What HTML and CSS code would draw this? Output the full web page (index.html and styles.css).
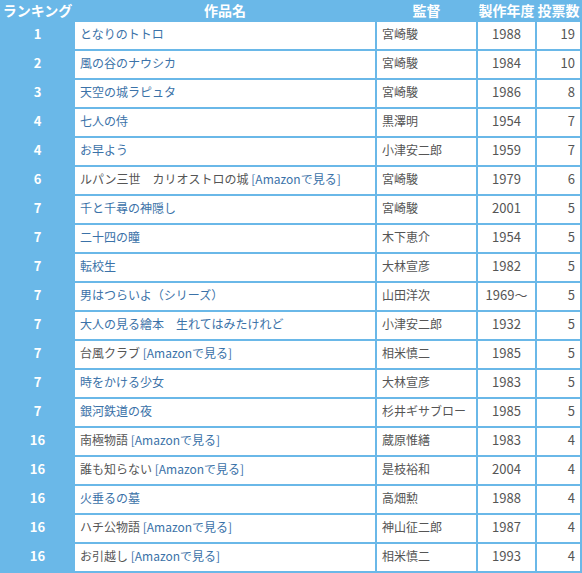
FILE: index.html
```html
<!DOCTYPE html>
<html lang="ja">
<head>
    <meta charset="UTF-8">
    <meta name="viewport" content="width=device-width, initial-scale=1.0">
    <title>ランキング</title>
    <link rel="stylesheet" href="styles.css">
</head>
<body>
    <table class="ranking">
        <thead>
            <tr>
                <th class="col-rank">ランキング</th>
                <th class="col-title">作品名</th>
                <th class="col-director">監督</th>
                <th class="col-year">製作年度</th>
                <th class="col-votes">投票数</th>
            </tr>
        </thead>
        <tbody>
            <tr><td class="rank">1</td><td class="title"><a href="#">となりのトトロ</a></td><td class="director">宮崎駿</td><td class="year">1988</td><td class="votes">19</td></tr>
            <tr><td class="rank">2</td><td class="title"><a href="#">風の谷のナウシカ</a></td><td class="director">宮崎駿</td><td class="year">1984</td><td class="votes">10</td></tr>
            <tr><td class="rank">3</td><td class="title"><a href="#">天空の城ラピュタ</a></td><td class="director">宮崎駿</td><td class="year">1986</td><td class="votes">8</td></tr>
            <tr><td class="rank">4</td><td class="title"><a href="#">七人の侍</a></td><td class="director">黒澤明</td><td class="year">1954</td><td class="votes">7</td></tr>
            <tr><td class="rank">4</td><td class="title"><a href="#">お早よう</a></td><td class="director">小津安二郎</td><td class="year">1959</td><td class="votes">7</td></tr>
            <tr><td class="rank">6</td><td class="title">ルパン三世　カリオストロの城 <a href="#">[Amazonで見る]</a></td><td class="director">宮崎駿</td><td class="year">1979</td><td class="votes">6</td></tr>
            <tr><td class="rank">7</td><td class="title"><a href="#">千と千尋の神隠し</a></td><td class="director">宮崎駿</td><td class="year">2001</td><td class="votes">5</td></tr>
            <tr><td class="rank">7</td><td class="title"><a href="#">二十四の瞳</a></td><td class="director">木下恵介</td><td class="year">1954</td><td class="votes">5</td></tr>
            <tr><td class="rank">7</td><td class="title"><a href="#">転校生</a></td><td class="director">大林宣彦</td><td class="year">1982</td><td class="votes">5</td></tr>
            <tr><td class="rank">7</td><td class="title"><a href="#">男はつらいよ（シリーズ）</a></td><td class="director">山田洋次</td><td class="year">1969～</td><td class="votes">5</td></tr>
            <tr><td class="rank">7</td><td class="title"><a href="#">大人の見る繪本　生れてはみたけれど</a></td><td class="director">小津安二郎</td><td class="year">1932</td><td class="votes">5</td></tr>
            <tr><td class="rank">7</td><td class="title">台風クラブ <a href="#">[Amazonで見る]</a></td><td class="director">相米慎二</td><td class="year">1985</td><td class="votes">5</td></tr>
            <tr><td class="rank">7</td><td class="title"><a href="#">時をかける少女</a></td><td class="director">大林宣彦</td><td class="year">1983</td><td class="votes">5</td></tr>
            <tr><td class="rank">7</td><td class="title"><a href="#">銀河鉄道の夜</a></td><td class="director">杉井ギサブロー</td><td class="year">1985</td><td class="votes">5</td></tr>
            <tr><td class="rank">16</td><td class="title">南極物語 <a href="#">[Amazonで見る]</a></td><td class="director">蔵原惟繕</td><td class="year">1983</td><td class="votes">4</td></tr>
            <tr><td class="rank">16</td><td class="title">誰も知らない <a href="#">[Amazonで見る]</a></td><td class="director">是枝裕和</td><td class="year">2004</td><td class="votes">4</td></tr>
            <tr><td class="rank">16</td><td class="title"><a href="#">火垂るの墓</a></td><td class="director">高畑勲</td><td class="year">1988</td><td class="votes">4</td></tr>
            <tr><td class="rank">16</td><td class="title">ハチ公物語 <a href="#">[Amazonで見る]</a></td><td class="director">神山征二郎</td><td class="year">1987</td><td class="votes">4</td></tr>
            <tr><td class="rank">16</td><td class="title">お引越し <a href="#">[Amazonで見る]</a></td><td class="director">相米慎二</td><td class="year">1993</td><td class="votes">4</td></tr>
        </tbody>
    </table>
</body>
</html>
```

FILE: styles.css
```css
body {
    margin: 0;
    background: #6ab8e8;
    font-family: "Noto Sans CJK JP", "Noto Sans", sans-serif;
}

.ranking {
    width: 582px;
    border-collapse: separate;
    border-spacing: 2px;
    margin-top: -2px;
    background: #6ab8e8;
    table-layout: fixed;
    font-size: 12px;
    color: #555;
}

.ranking th {
    height: 20px;
    padding: 0;
    font-size: 14px;
    font-weight: bold;
    color: #fff;
    text-align: center;
    line-height: 20px;
    white-space: nowrap;
}

.col-rank { width: 71px; }
.col-title { width: 300px; }
.col-director { width: 99px; }
.col-year { width: 57px; }
.col-votes { width: 43px; }

.ranking td {
    box-sizing: border-box;
    height: 27px;
    padding: 0 5px 3px;
    background: #fff;
    white-space: nowrap;
    line-height: 24px;
}

.ranking td.year,
.ranking td.votes {
    font-size: 13px;
}

.ranking td.rank {
    background: transparent;
    color: #fff;
    font-size: 13px;
    font-weight: bold;
    text-align: center;
}

.ranking td.year {
    text-align: center;
}

.ranking td.votes {
    text-align: right;
}

.ranking a {
    color: #3b72a8;
    text-decoration: none;
}
```
